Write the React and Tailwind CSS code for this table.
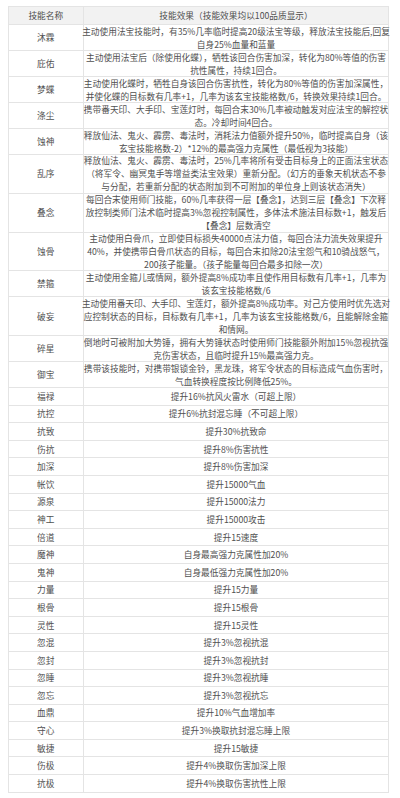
const rows = [
  ["沐霖", ["主动使用法宝技能时，有35%几率临时提高20级法宝等级，释放法宝技能后,回复", "自身25%血量和蓝量"]],
  ["庇佑", ["主动使用法宝后（除使用化蝶），牺牲该回合伤害加深，转化为80%等值的伤害", "抗性属性，持续1回合。"]],
  ["梦蝶", ["主动使用化蝶时，牺牲自身该回合伤害抗性，转化为80%等值的伤害加深属性，", "并使化蝶的目标数有几率+1，几率为该玄宝技能格数/6，转换效果持续1回合。"]],
  ["涤尘", ["携带番天印、大手印、宝莲灯时，每回合末30%几率被动触发对应法宝的解控状", "态。冷却时间4回合。"]],
  ["蚀神", ["释放仙法、鬼火、霹雳、毒法时，消耗法力值额外提升50%，临时提高自身（该", "玄宝技能格数-2）*12%的最高强力克属性（最低视为3技能）"]],
  ["乱序", ["释放仙法、鬼火、霹雳、毒法时，25%几率将所有受击目标身上的正面法宝状态", "（将军令、幽冥鬼手等增益类法宝效果）重新分配。（幻方的垂象天机状态不参", "与分配，若重新分配的状态附加到不可附加的单位身上则该状态消失）"]],
  ["叠念", ["每回合末使用师门技能，60%几率获得一层【叠念】，达到三层【叠念】下次释", "放控制类师门法术临时提高3%忽视控制属性，多体法术施法目标数+1，触发后", "【叠念】层数清空"]],
  ["蚀骨", ["主动使用白骨爪，立即使目标损失40000点法力值，每回合法力流失效果提升", "40%，并使携带白骨爪状态的目标，每回合末扣除20法宝怨气和10骑战怒气，", "200孩子能量。（孩子能量每回合最多扣除一次）"]],
  ["禁箍", ["主动使用金箍儿或情网，额外提高8%成功率且使作用目标数有几率+1，几率为", "该玄宝技能格数/6"]],
  ["破妄", ["主动使用番天印、大手印、宝莲灯，额外提高8%成功率。对己方使用时优先选对", "应控制状态的目标，目标数有几率+1，几率为该玄宝技能格数/6，且能解除金箍", "和情网。"]],
  ["碎星", ["倒地时可被附加大势锤，拥有大势锤状态时使用师门技能额外附加15%忽视抗强", "克伤害状态，且临时提升15%最高强力克。"]],
  ["御宝", ["携带该技能时，对携带银锁金铃，黑龙珠，将军令状态的目标造成气血伤害时，", "气血转换程度按比例降低25%。"]],
  ["福禄", ["提升16%抗风火雷水（可超上限）"]],
  ["抗控", ["提升6%抗封混忘睡（不可超上限）"]],
  ["抗致", ["提升30%抗致命"]],
  ["伤抗", ["提升8%伤害抗性"]],
  ["加深", ["提升8%伤害加深"]],
  ["帐饮", ["提升15000气血"]],
  ["源泉", ["提升15000法力"]],
  ["神工", ["提升15000攻击"]],
  ["倍道", ["提升15速度"]],
  ["魔神", ["自身最高强力克属性加20%"]],
  ["鬼神", ["自身最低强力克属性加20%"]],
  ["力量", ["提升15力量"]],
  ["根骨", ["提升15根骨"]],
  ["灵性", ["提升15灵性"]],
  ["忽混", ["提升3%忽视抗混"]],
  ["忽封", ["提升3%忽视抗封"]],
  ["忽睡", ["提升3%忽视抗睡"]],
  ["忽忘", ["提升3%忽视抗忘"]],
  ["血鼎", ["提升10%气血增加率"]],
  ["守心", ["提升3%换取抗封混忘睡上限"]],
  ["敏捷", ["提升15敏捷"]],
  ["伤极", ["提升4%换取伤害加深上限"]],
  ["抗极", ["提升4%换取伤害抗性上限"]],
];

// row height by number of text lines
const heights = { 1: "h-[17.6px]", 2: "h-[26px]", 3: "h-[38.75px]" };

export default function App() {
  return (
    <div className="min-h-[798px] bg-white pt-[6px] pl-[7.5px] font-['Noto_Sans_CJK_SC',sans-serif] text-[8.7px] leading-[13px] text-[#505050]">
      <div className="flex w-[381.5px] flex-col border-l border-t border-[#e4e4e4]">
        <div className="flex h-[18px] bg-[#f2f2f2]">
          <div className="flex w-[75.5px] shrink-0 items-center justify-center border-b border-r border-[#e4e4e4]">技能名称</div>
          <div className="flex flex-1 items-center justify-center border-b border-r border-[#e4e4e4]">技能效果（技能效果均以100品质显示）</div>
        </div>
        {rows.map(([name, lines]) => (
          <div key={name} className={`flex ${heights[lines.length]}`}>
            <div className="flex w-[75.5px] shrink-0 items-center justify-center border-b border-r border-[#e4e4e4]">{name}</div>
            <div className="flex min-w-0 flex-1 flex-col items-center justify-center border-b border-r border-[#e4e4e4] px-[2px]">
              {lines.map((l, i) => (
                <div key={i} className="whitespace-nowrap text-center">{l}</div>
              ))}
            </div>
          </div>
        ))}
      </div>
    </div>
  );
}
